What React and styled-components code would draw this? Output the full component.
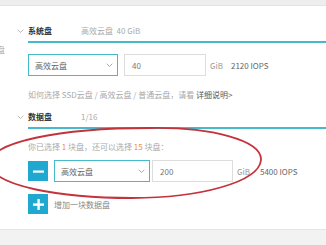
import React from 'react';
import styled, { createGlobalStyle } from "styled-components"

const Global = createGlobalStyle`
  html, body {
    margin: 0;
    padding: 0;
    background: #f2f2f2;
    font-family: "Noto Sans CJK SC", "Noto Sans", sans-serif;
    font-size: 8px;
  }
`

const Chevron = ({ color = "#aaa", w = 7 }) => (
  <svg width={w} height={w * 0.6} viewBox="0 0 10 6">
    <polyline points="1,1 5,5 9,1" fill="none" stroke={color} strokeWidth="1.2" />
  </svg>
)

const TopBar = styled.div`
  height: 5px;
  background: #eeeeee;
  border-bottom: 1px solid #e3e3e3;
`

const Panel = styled.div`
  position: relative;
  display: flex;
  background: #fff;
  overflow: hidden;
  padding-bottom: 15px;
  border-bottom: 1px solid #e4e4e4;
`

const SideCol = styled.div`
  width: 5px;
  overflow: hidden;
  display: flex;
  justify-content: flex-end;
  padding-top: 38px;
  color: #aaa;
  line-height: 12px;
  white-space: nowrap;
`

const Main = styled.div`
  flex: 1;
  min-width: 0;
`

const Section = styled.div`
  margin-top: ${p => p.$top}px;
`

const HeaderRow = styled.div`
  display: flex;
  align-items: flex-start;
`

const ChevronCell = styled.div`
  width: 23px;
  height: 12px;
  display: flex;
  align-items: center;
  justify-content: flex-end;
  padding-right: 4px;
  box-sizing: border-box;
`

const HeaderBar = styled.div`
  flex: 1;
  display: flex;
  line-height: 12px;
  padding-bottom: 4px;
  border-bottom: 2px solid #45bacb;
`

const Title = styled.div`
  width: 53px;
  font-weight: bold;
  color: #333;
`

const Summary = styled.div`
  color: #aaa;
`

const Body = styled.div`
  padding-left: 23px;
`

const Row = styled.div`
  display: flex;
  align-items: center;
  height: 22px;
  margin-top: ${p => p.$top}px;
  white-space: nowrap;

  & > * {
    flex: none;
  }
`

const Select = styled.div`
  width: ${p => p.$w}px;
  height: 22px;
  box-sizing: border-box;
  border: 1px solid #45bacb;
  display: flex;
  align-items: center;
  justify-content: space-between;
  padding: 0 4px 0 6px;
  color: #666;
  margin-left: ${p => p.$left || 0}px;
`

const Input = styled.div`
  width: ${p => p.$w}px;
  height: 22px;
  box-sizing: border-box;
  border: 1px solid #dddddd;
  display: flex;
  align-items: center;
  padding-left: 7px;
  color: #777;
  margin-left: ${p => p.$left}px;
`

const Unit = styled.span`
  color: #999;
  margin-left: 4px;
`

const Iops = styled.span`
  color: #666;
  margin-left: ${p => p.$left}px;
`

const Faint = styled.span`
  color: #bbb;
  margin-left: 30px;
`

const Help = styled.div`
  margin-top: 13px;
  line-height: 12px;
  color: #aaa;
  white-space: nowrap;

  b {
    font-weight: normal;
    color: #555;
  }
`

const Note = styled.div`
  margin-top: 12px;
  line-height: 12px;
  color: #aaa;
  white-space: nowrap;

  em {
    font-style: normal;
    color: #ef8b45;
  }
`

const SquareButton = styled.div`
  width: 20px;
  height: 20px;
  flex: none;
  background: #1fa8d0;
  display: flex;
  align-items: center;
  justify-content: center;
`

const AddRow = styled.div`
  display: flex;
  align-items: center;
  margin-top: 12px;
  color: #888;
  gap: 6px;
`

const Annotation = styled.svg`
  position: absolute;
  left: 0;
  top: -6px;
  pointer-events: none;
`

function App() {
  return (
    <>
      <Global />
      <TopBar />
      <Panel>
        <SideCol>盘</SideCol>
        <Main>
          <Section $top={19}>
            <HeaderRow>
              <ChevronCell><Chevron /></ChevronCell>
              <HeaderBar>
                <Title>系统盘</Title>
                <Summary>高效云盘&nbsp;&nbsp;40 GiB</Summary>
              </HeaderBar>
            </HeaderRow>
            <Body>
              <Row $top={11}>
                <Select $w={90}>高效云盘<Chevron color="#999" /></Select>
                <Input $w={82} $left={6}>40</Input>
                <Unit>GiB</Unit>
                <Iops $left={8}>2120 IOPS</Iops>
              </Row>
              <Help>如何选择 SSD云盘 / 高效云盘 / 普通云盘，请看 <b>详细说明&gt;</b></Help>
            </Body>
          </Section>
          <Section $top={10}>
            <HeaderRow>
              <ChevronCell><Chevron /></ChevronCell>
              <HeaderBar>
                <Title>数据盘</Title>
                <Summary>1/16</Summary>
              </HeaderBar>
            </HeaderRow>
            <Body>
              <Note>你已选择 <em>1</em> 块盘，还可以选择 <em>15</em> 块盘：</Note>
              <Row $top={7}>
                <SquareButton>
                  <svg width="11" height="11" viewBox="0 0 11 11">
                    <rect x="0" y="4.5" width="11" height="2.2" fill="#fff" />
                  </svg>
                </SquareButton>
                <Select $w={96} $left={6}>高效云盘<Chevron color="#999" /></Select>
                <Input $w={81} $left={2}>200</Input>
                <Unit>GiB</Unit>
                <Iops $left={10}>5400 IOPS</Iops>
                <Faint>最</Faint>
              </Row>
              <AddRow>
                <SquareButton>
                  <svg width="11" height="11" viewBox="0 0 11 11">
                    <rect x="0" y="4.4" width="11" height="2.4" fill="#fff" />
                    <rect x="4.4" y="0" width="2.4" height="11" fill="#fff" />
                  </svg>
                </SquareButton>
                增加一块数据盘
              </AddRow>
            </Body>
          </Section>
        </Main>
        <Annotation width="326" height="245" viewBox="0 0 326 245">
          <path
            d="M150 128 C 210 127, 262 140, 261 160 C 259 182, 200 198, 132 198 C 60 198, -8 186, -10 164 C -11 142, 60 128, 150 128 Z"
            fill="none"
            stroke="#c4333b"
            strokeWidth="1.8"
          />
        </Annotation>
      </Panel>
    </>
  );
}

export default App;
